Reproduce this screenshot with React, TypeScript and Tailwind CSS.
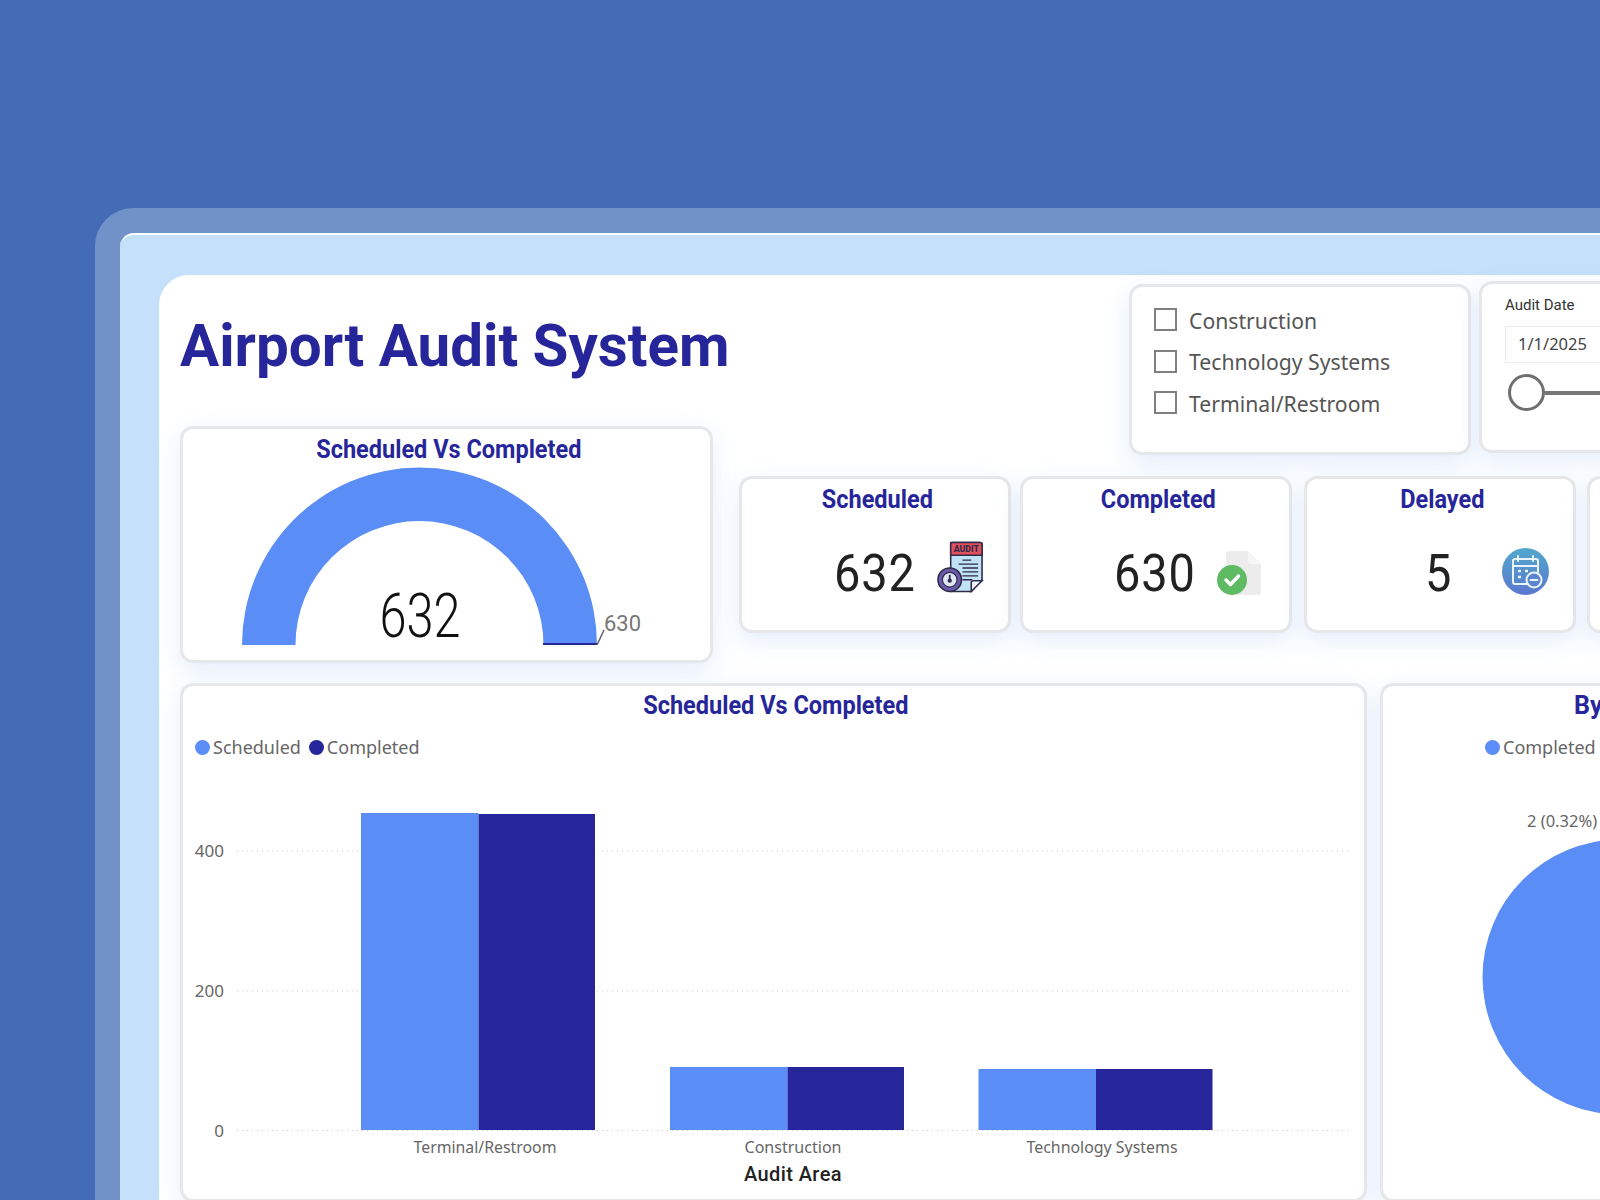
import type { ReactNode } from "react";

const din = "font-['Roboto',sans-serif]";
const ui = "font-['Noto_Sans',sans-serif]";
const card = "rounded-[13px] border-[3px] border-[#e6e7e9] bg-white shadow-[0_8px_24px_rgba(90,150,230,0.16)]";

const CardTitle = ({ children }: { children: string }) => (
  <div className={`${din} origin-center scale-x-[0.94] pl-[5px] text-center text-[25px] leading-[30px] font-bold whitespace-nowrap text-[#26269a]`}>
    {children}
  </div>
);

const LegendItem = ({ color, label }: { color: string; label: string }) => (
  <div className="flex items-center gap-[3px]">
    <span className="h-[15px] w-[15px] rounded-full" style={{ background: color }} />
    <span className={`${ui} text-[18px] leading-6 text-[#666666]`}>{label}</span>
  </div>
);

const AuditIcon = () => (
  <svg width="47" height="54" viewBox="0 0 48 54" className="mb-[2px] shrink-0">
    <path d="M14 2h30a2 2 0 0 1 2 2v36l-11 12H14z" fill="#bfe3f5" stroke="#2f2b4a" strokeWidth="1.6" />
    <path d="M14 15V4a2 2 0 0 1 2-2h28a2 2 0 0 1 2 2v11z" fill="#e2505c" stroke="#2f2b4a" strokeWidth="1.6" />
    <text x="30" y="12" textAnchor="middle" fontSize="9" fontWeight="800" fill="#2f2b4a" fontFamily="Roboto, sans-serif">AUDIT</text>
    <path d="M26 20h9M22 24h20M26 28h16M26 32h16M26 36h16M26 40h10" stroke="#2f2b4a" strokeWidth="1.4" />
    <path d="M35 52v-9a2 2 0 0 1 2-2h9z" fill="#f4f8fb" stroke="#2f2b4a" strokeWidth="1.6" />
    <circle cx="13" cy="40" r="12" fill="#6a5aa8" stroke="#2f2b4a" strokeWidth="1.6" />
    <circle cx="13" cy="40" r="7.5" fill="#dfe6f5" stroke="#2f2b4a" strokeWidth="1.2" />
    <path d="M13 35v5" stroke="#2f2b4a" strokeWidth="1.8" />
    <circle cx="13" cy="41" r="2.2" fill="#2f2b4a" />
  </svg>
);

const DoneIcon = () => (
  <svg width="44" height="44" viewBox="0 0 44 44" className="mb-[1px] shrink-0">
    <path d="M9 3a3 3 0 0 1 3-3h19l13 13v28a3 3 0 0 1-3 3H12a3 3 0 0 1-3-3z" fill="#ececec" />
    <path d="M31 0l13 13H34a3 3 0 0 1-3-3z" fill="#f6f6f6" />
    <circle cx="15" cy="29" r="15" fill="#5fbb63" />
    <path d="M9 29l4.5 4.5L21.5 25" fill="none" stroke="#fff" strokeWidth="3.4" strokeLinecap="round" strokeLinejoin="round" />
  </svg>
);

const DelayIcon = () => (
  <svg width="47" height="47" viewBox="0 0 47 47" className="mb-[1px] shrink-0">
    <defs>
      <linearGradient id="delayFill" x1="0" y1="0" x2="0" y2="1">
        <stop offset="0" stopColor="#52a8cc" />
        <stop offset="1" stopColor="#5b78cf" />
      </linearGradient>
    </defs>
    <circle cx="23.5" cy="23.5" r="23.5" fill="url(#delayFill)" />
    <path d="M25 36H13a2 2 0 0 1-2-2V13a2 2 0 0 1 2-2h21a2 2 0 0 1 2 2v11M11 18h25M16 8v5M31 8v5" fill="none" stroke="#eaf4fb" strokeWidth="2" strokeLinecap="round" />
    <path d="M16 23h3M23 23h3M16 29h3" stroke="#eaf4fb" strokeWidth="2.4" />
    <circle cx="32" cy="32" r="7.5" fill="#5b86cf" stroke="#eaf4fb" strokeWidth="2" />
    <path d="M28.5 32h7" stroke="#eaf4fb" strokeWidth="2" strokeLinecap="round" />
  </svg>
);

const Kpi = ({ title, value, icon, indent, gap }: { title: string; value: string; icon: ReactNode; indent: string; gap: string }) => (
  <div className={`${card} h-[157px] w-[272px] shrink-0`}>
    <div className="pt-[6px]"><CardTitle>{title}</CardTitle></div>
    <div className={`flex h-[81px] items-end ${indent} ${gap}`}>
      <span className={`${din} -mb-[6px] origin-left scale-x-[0.92] text-[51px] leading-[56px] tracking-[0.02em] text-[#222222]`}>{value}</span>
      {icon}
    </div>
  </div>
);

const Gauge = () => (
  <svg width="525" height="180" viewBox="0 0 525 180" className="ml-[1px] block">
    <path d="M58 178a177.5 177.5 0 0 1 355 0h-53.5a124 124 0 0 0-248 0z" fill="#5b8df6" />
    <rect x="359" y="176" width="54" height="2" fill="#26269a" />
    <path d="M413 178l7-15" stroke="#666666" strokeWidth="1.6" />
    <text x="236" y="170" textAnchor="middle" fontSize="62" fontWeight="300" fill="#111111" textLength="81" lengthAdjust="spacingAndGlyphs" fontFamily="Roboto, sans-serif">632</text>
    <text x="420" y="164" fontSize="22" fill="#777777" textLength="37" lengthAdjust="spacingAndGlyphs" fontFamily="Roboto, sans-serif">630</text>
  </svg>
);

const bars = [
  { label: "Terminal/Restroom", x: 361, labelX: 485, a: 813, b: 814, w: 143 },
  { label: "Construction", x: 670, labelX: 793, a: 1067, b: 1067, w: 97 },
  { label: "Technology Systems", x: 978.5, labelX: 1102, a: 1069, b: 1069, w: 151 },
];

const BarChart = () => (
  <svg width="1181" height="445" viewBox="183 755 1181 445" className="-mt-[4px] block">
    {[851, 991, 1130.5].map((y) => (
      <line key={y} x1="237" x2="1349" y1={y} y2={y} stroke="#c9c9c9" strokeWidth="1" strokeDasharray="1 4" />
    ))}
    {([["400", 857], ["200", 997], ["0", 1137]] as const).map(([t, y]) => (
      <text key={t} x="224" y={y} textAnchor="end" fontSize="17" fill="#666666" fontFamily="Noto Sans, sans-serif">{t}</text>
    ))}
    {bars.map((b) => (
      <g key={b.label}>
        <rect x={b.x} y={b.a} width="117.5" height={1130 - b.a} fill="#5b8df6" />
        <rect x={b.x + 117.5} y={b.b} width="116.5" height={1130 - b.b} fill="#26269a" />
        <text x={b.labelX} y="1153" textAnchor="middle" fontSize="17" fill="#666666" fontFamily="Noto Sans, sans-serif" textLength={b.w} lengthAdjust="spacingAndGlyphs">{b.label}</text>
      </g>
    ))}
    <text x="793" y="1181" textAnchor="middle" fontSize="20" fontWeight="500" fill="#222222" fontFamily="Roboto, sans-serif" letterSpacing="0.4">Audit Area</text>
  </svg>
);

export default function App() {
  return (
    <div className="h-[1200px] w-[1600px] overflow-hidden bg-[#446cb6] pt-[208px] pl-[95px]">
      <div className="h-[992px] w-[1600px] rounded-tl-[38px] bg-[#7191c9] pt-[25px] pl-[25px]">
        <div className="h-[967px] w-[1600px] rounded-tl-[14px] border-t-2 border-white bg-[#c5e0fa] pt-[40px] pl-[39px]">
          <div className="h-[930px] w-[1500px] rounded-tl-[30px] bg-white pl-[21px]">
            <div className="flex">
              <div className="w-[533px] shrink-0">
                <h1 className="h-[151px] pt-[39px] font-['Roboto',sans-serif] text-[58.3px] leading-[64px] font-bold whitespace-nowrap text-[#26269a]">
                  Airport Audit System
                </h1>
                <div className={`${card} h-[237px]`}>
                  <div className="pt-[6px]"><CardTitle>Scheduled Vs Completed</CardTitle></div>
                  <div className="mt-[2px]"><Gauge /></div>
                </div>
              </div>
              <div className="ml-[26px] shrink-0 pt-[6px]">
                <div className="ml-[390px] flex items-start gap-[8px]">
                  <div className={`${card} mt-[3px] flex h-[171px] w-[342px] shrink-0 flex-col gap-[18.5px] pt-[21px] pl-[22px]`}>
                    {["Construction", "Technology Systems", "Terminal/Restroom"].map((item) => (
                      <label key={item} className="flex h-[23px] items-center gap-[12px]">
                        <span className="h-[23px] w-[23px] border-2 border-[#808080] bg-white" />
                        <span className={`${ui} mt-[2px] text-[21.2px] leading-[28px] whitespace-nowrap text-[#555555]`}>{item}</span>
                      </label>
                    ))}
                  </div>
                  <div className={`${card} h-[172px] w-[300px] shrink-0 pt-[11px] pl-[23px]`}>
                    <div className={`${din} text-[15px] leading-[20px] text-[#333333]`}>Audit Date</div>
                    <div className={`${ui} mt-[11px] flex h-[37px] w-[200px] items-center border border-[#ececec] pl-[12px] text-[16.5px] text-[#444444]`}>1/1/2025</div>
                    <div className="mt-[11px] flex items-center pl-[3px]">
                      <span className="h-[37px] w-[37px] rounded-full border-[3px] border-[#6f6f6f] bg-white" />
                      <span className="h-[4px] w-[200px] bg-[#777777]" />
                    </div>
                  </div>
                </div>
                <div className="mt-[21px] flex">
                  <Kpi title="Scheduled" value="632" icon={<AuditIcon />} indent="pl-[92px]" gap="gap-[14px]" />
                  <div className="ml-[9px]"><Kpi title="Completed" value="630" icon={<DoneIcon />} indent="pl-[91px]" gap="gap-[14px]" /></div>
                  <div className="ml-[12px]"><Kpi title="Delayed" value="5" icon={<DelayIcon />} indent="pl-[118px]" gap="gap-[47px]" /></div>
                  <div className={`${card} ml-[11px] h-[157px] w-[272px] shrink-0`} />
                </div>
              </div>
            </div>
            <div className="mt-[20px] flex gap-[13px]">
              <div className={`${card} h-[519px] w-[1187px] shrink-0`}>
                <div className="pt-[5px]"><CardTitle>Scheduled Vs Completed</CardTitle></div>
                <div className="mt-[14px] flex gap-[8px] pl-[12px]">
                  <LegendItem color="#5b8df6" label="Scheduled" />
                  <LegendItem color="#26269a" label="Completed" />
                </div>
                <BarChart />
              </div>
              <div className={`${card} h-[519px] w-[400px] shrink-0 pt-[5px]`}>
                <div className={`${din} pl-[191px] text-[25px] leading-[30px] font-bold text-[#26269a]`}>By</div>
                <div className="mt-[14px] pl-[102px]"><LegendItem color="#5b8df6" label="Completed" /></div>
                <div className={`${ui} mt-[50px] pl-[144px] text-[16.5px] leading-[24px] text-[#666666]`}>2 (0.32%)</div>
                <svg width="300" height="290" viewBox="0 0 300 290" className="mt-[6px] block">
                  <circle cx="237" cy="138" r="137.5" fill="#5b8df6" />
                </svg>
              </div>
            </div>
          </div>
        </div>
      </div>
    </div>
  );
}
